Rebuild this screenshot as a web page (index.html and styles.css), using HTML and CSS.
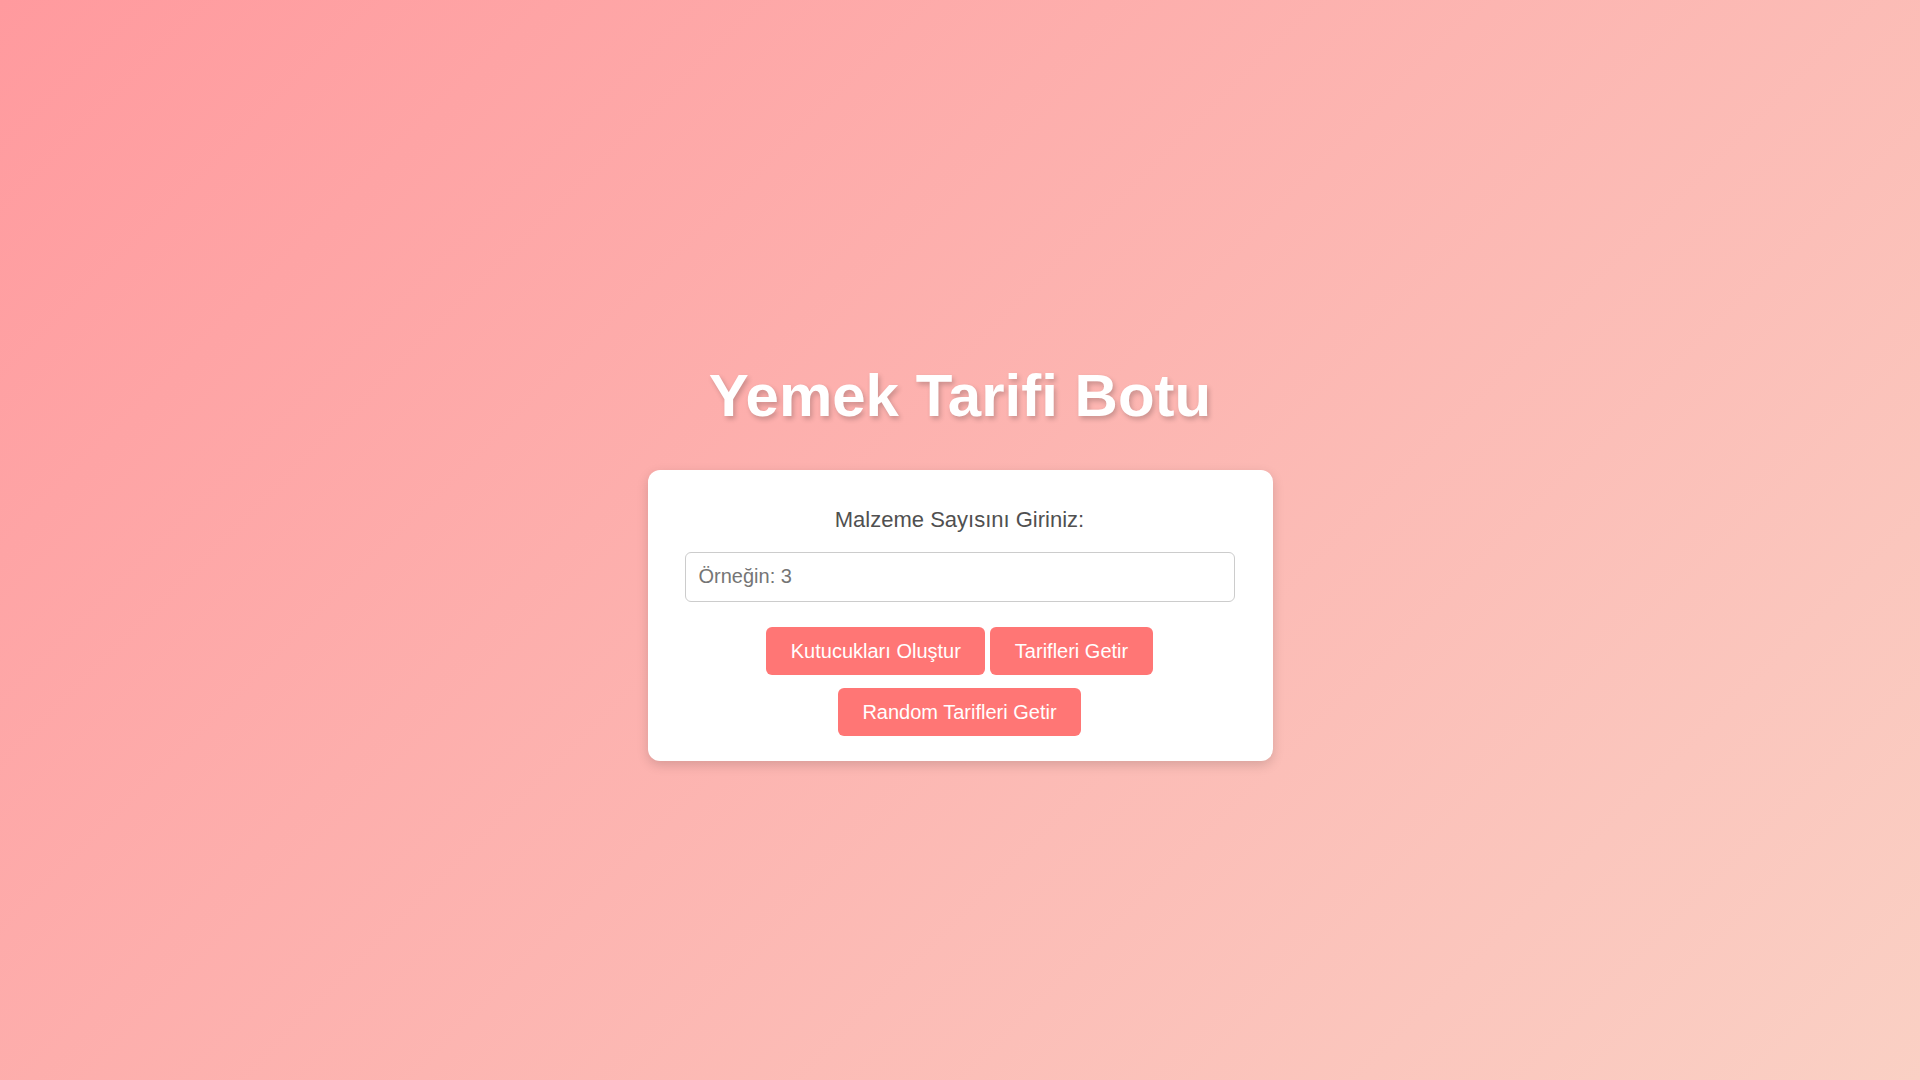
FILE: index.html
```html
<!DOCTYPE html>
<html lang="tr">
<head>
<meta charset="utf-8">
<title>Yemek Tarifi Botu</title>
<link rel="stylesheet" href="styles.css">
</head>
<body>
  <main class="page">
    <h1 class="title">Yemek Tarifi Botu</h1>
    <section class="card">
      <label class="label" for="count">Malzeme Sayısını Giriniz:</label>
      <input class="input" id="count" type="number" placeholder="Örneğin: 3">
      <div class="actions">
        <div class="row">
          <button class="btn" type="button">Kutucukları Oluştur</button>
          <button class="btn" type="button">Tarifleri Getir</button>
        </div>
        <div class="row">
          <button class="btn" type="button">Random Tarifleri Getir</button>
        </div>
      </div>
    </section>
  </main>
</body>
</html>
```
FILE: styles.css
```css
* { box-sizing: border-box; }

html, body {
  margin: 0;
  padding: 0;
  height: 100%;
}

body {
  font-family: "Liberation Sans", Arial, sans-serif;
  background: linear-gradient(135deg, #ff9a9e 0%, #fad0c4 100%);
  min-height: 100vh;
}

.page {
  min-height: 100vh;
  display: flex;
  flex-direction: column;
  align-items: center;
  justify-content: center;
}

.title {
  margin: 41px 0 40px;
  font-size: 60px;
  font-weight: bold;
  color: #ffffff;
  text-shadow: 2px 3px 5px rgba(0, 0, 0, 0.2);
  line-height: normal;
}

.card {
  width: 625px;
  background: #ffffff;
  border-radius: 12px;
  box-shadow: 0 4px 12px rgba(0, 0, 0, 0.15);
  padding: 37px 38px 25px 37px;
  display: flex;
  flex-direction: column;
  align-items: center;
}

.label {
  display: block;
  font-size: 22px;
  color: #505050;
  line-height: normal;
  margin-bottom: 19px;
}

.input {
  width: 100%;
  height: 50px;
  padding: 12px 13px;
  font-family: "Liberation Sans", Arial, sans-serif;
  font-size: 20px;
  border: 1px solid #cccccc;
  border-radius: 6px;
  color: #333;
  outline: none;
  margin-bottom: 25px;
}

.input::placeholder {
  color: #757575;
}

.actions {
  display: flex;
  flex-direction: column;
  align-items: center;
  gap: 13px;
}

.row {
  display: flex;
  justify-content: center;
  gap: 5px;
}

.btn {
  font-family: "Liberation Sans", Arial, sans-serif;
  font-size: 20px;
  line-height: 24px;
  padding: 12px 24.5px;
  color: #ffffff;
  background: #ff7675;
  border: none;
  border-radius: 6px;
  cursor: pointer;
}
```
